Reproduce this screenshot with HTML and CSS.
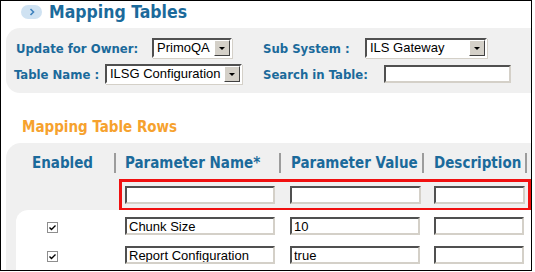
FILE: index.html
```html
<!DOCTYPE html>
<html lang="en">
<head>
  <meta charset="UTF-8" />
  <title>Mapping Tables</title>
  <link rel="stylesheet" href="styles.css">
</head>
<body>
  <div class="frame">
    <h1 class="title">
      <span class="pill"><svg width="6" height="8" viewBox="0 0 6 8"><polyline points="1.5,1 4.5,4 1.5,7" fill="none" stroke="#3f82bd" stroke-width="1.6"/></svg></span>
      Mapping Tables
    </h1>

    <div class="filters">
      <div class="filter-row row-a">
        <div class="field">
          <label class="flabel w-owner">Update for Owner:</label>
          <div class="select w-owner-sel"><span class="select-text">PrimoQA</span><span class="select-btn"><i></i></span></div>
        </div>
        <div class="field">
          <label class="flabel w-sub">Sub System :</label>
          <div class="select w-sub-sel"><span class="select-text">ILS Gateway</span><span class="select-btn"><i></i></span></div>
        </div>
      </div>
      <div class="filter-row row-b">
        <div class="field">
          <label class="flabel w-table">Table Name :</label>
          <div class="select w-table-sel"><span class="select-text">ILSG Configuration</span><span class="select-btn"><i></i></span></div>
        </div>
        <div class="field">
          <label class="flabel w-search">Search in Table:</label>
          <input type="text" class="txt w-search-box" />
        </div>
      </div>
    </div>

    <h2 class="section">Mapping Table Rows</h2>

    <div class="rows-panel">
      <div class="thead">
        <div class="th th-first">Enabled</div>
        <div class="th">Parameter Name*</div>
        <div class="th">Parameter Value</div>
        <div class="th th-last">Description</div>
      </div>

      <div class="new-row">
        <div class="highlight">
          <input type="text" class="txt f-name" />
          <input type="text" class="txt f-value" />
          <input type="text" class="txt f-desc" />
        </div>
      </div>

      <div class="tbody">
        <div class="tr">
          <div class="td"><span class="check"><svg width="9" height="9" viewBox="0 0 9 9"><polyline points="1.5,4.5 3.5,6.5 7.5,2.5" fill="none" stroke="#000" stroke-width="1.4"/></svg></span></div>
          <div class="td"><input type="text" class="txt c-name" value="Chunk Size" /></div>
          <div class="td"><input type="text" class="txt c-value" value="10" /></div>
          <div class="td"><input type="text" class="txt c-desc" /></div>
        </div>
        <div class="tr">
          <div class="td"><span class="check"><svg width="9" height="9" viewBox="0 0 9 9"><polyline points="1.5,4.5 3.5,6.5 7.5,2.5" fill="none" stroke="#000" stroke-width="1.4"/></svg></span></div>
          <div class="td"><input type="text" class="txt c-name" value="Report Configuration" /></div>
          <div class="td"><input type="text" class="txt c-value" value="true" /></div>
          <div class="td"><input type="text" class="txt c-desc" /></div>
        </div>
      </div>
    </div>
  </div>
</body>
</html>
```

FILE: styles.css
```css
:root {
  --azul: #1b6a9b;
  --naranja: #f6a22e;
  --gris-panel: #f0f0f0;
  --borde-oscuro: #505050;
  --borde-claro: #d4d0c8;
}

* {
  box-sizing: border-box;
}

body {
  margin: 0;
  background: #fff;
}

.frame {
  width: 532px;
  height: 271px;
  border: 1px solid #000;
  overflow: hidden;
  font-family: "DejaVu Sans Condensed", "DejaVu Sans", sans-serif;
}

/* titulo */
.title {
  margin: 0;
  height: 27px;
  padding: 4px 0 0 20px;
  display: flex;
  align-items: flex-start;
  gap: 7px;
  font-size: 17.5px;
  line-height: 15px;
  font-weight: bold;
  color: var(--azul);
}

.pill {
  width: 21px;
  height: 14px;
  border-radius: 7px;
  background: #cfe2f2;
  display: flex;
  align-items: center;
  justify-content: center;
}

/* filtros */
.filters {
  margin-left: 5px;
  background: var(--gris-panel);
  border-radius: 14px 0 0 14px;
  padding: 10px 0 9px;
  display: flex;
  flex-direction: column;
  gap: 6px;
}

.filter-row {
  display: grid;
  grid-template-columns: 257px 1fr;
  height: 20px;
}

.row-a .field:first-child {
  padding-left: 10px;
}

.row-b .field:first-child {
  padding-left: 8px;
}

.field {
  display: flex;
  align-items: center;
}

.flabel {
  font-size: 13px;
  font-weight: bold;
  color: var(--azul);
  white-space: nowrap;
}

.w-owner { width: 136px; }
.w-sub { width: 102px; }
.w-table { width: 91px; }
.w-search { width: 121px; }

.w-owner-sel { width: 80px; }
.w-sub-sel { width: 122px; }
.w-table-sel { width: 137px; }
.w-search-box { width: 127px; height: 19px; }

.select {
  display: flex;
  height: 20px;
  background: #fff;
  border: 2px solid;
  border-color: var(--borde-oscuro) #fff #fff var(--borde-oscuro);
  box-shadow: 1px 1px 0 var(--borde-claro);
}

.select-text {
  flex: 1;
  padding-left: 3px;
  font-family: "Liberation Sans", Arial, sans-serif;
  font-size: 13px;
  line-height: 16px;
  color: #000;
  white-space: nowrap;
  overflow: hidden;
}

.select-btn {
  width: 16px;
  background: var(--borde-claro);
  border: 1px solid;
  border-color: #fff #404040 #404040 #fff;
  display: flex;
  align-items: center;
  justify-content: center;
}

.select-btn i {
  width: 0;
  height: 0;
  border-left: 3px solid transparent;
  border-right: 3px solid transparent;
  border-top: 3px solid #000;
}

.txt {
  margin: 0;
  height: 18px;
  padding: 0 2px;
  border: 2px solid;
  border-color: var(--borde-oscuro) var(--borde-claro) var(--borde-claro) var(--borde-oscuro);
  background: #fff;
  font-family: "Liberation Sans", Arial, sans-serif;
  font-size: 13px;
  color: #000;
  outline: none;
}

/* filas */
.section {
  margin: 0;
  height: 50px;
  padding: 25px 0 0 21px;
  font-size: 15px;
  line-height: 18px;
  font-weight: bold;
  color: var(--naranja);
}

.rows-panel {
  margin-left: 5px;
  background: var(--gris-panel);
  border-top-left-radius: 15px;
}

.thead {
  display: grid;
  grid-template-columns: 108px 165px 143px 105px;
  height: 36px;
  padding-top: 10px;
}

.th {
  height: 20px;
  line-height: 20px;
  border-left: 2px solid #9c9c9c;
  padding-left: 10px;
  font-size: 15px;
  font-weight: bold;
  color: var(--azul);
  white-space: nowrap;
}

.th-first {
  border-left: none;
  padding-left: 26px;
}

.thead .th:nth-child(2) {
  padding-left: 9px;
}

.th-last {
  border-right: 2px solid #9c9c9c;
}

.new-row {
  padding-left: 113px;
  height: 32px;
}

.highlight {
  height: 32px;
  border: 3px solid #f01010;
  display: flex;
  align-items: center;
}

.f-name { margin-left: 3px; width: 150px; }
.f-value { margin-left: 15px; width: 131px; }
.f-desc { margin-left: 13px; width: 91px; }

.tbody {
  margin-top: -1px;
  margin-left: 10px;
  background: #fff;
  border-top-left-radius: 12px;
  padding-top: 7px;
  height: 80px;
}

.tr {
  display: grid;
  grid-template-columns: 98px 165px 143px 105px;
  height: 29px;
}

.td {
  display: flex;
  align-items: flex-start;
}

.check {
  margin: 5px 0 0 31px;
  width: 11px;
  height: 11px;
  border: 1px solid #8e8e8e;
  background: #fff;
  display: flex;
  align-items: center;
  justify-content: center;
}

.c-name { margin-left: 11px; width: 150px; }
.c-value { margin-left: 11px; width: 130px; }
.c-desc { margin-left: 12px; width: 90px; }
```
